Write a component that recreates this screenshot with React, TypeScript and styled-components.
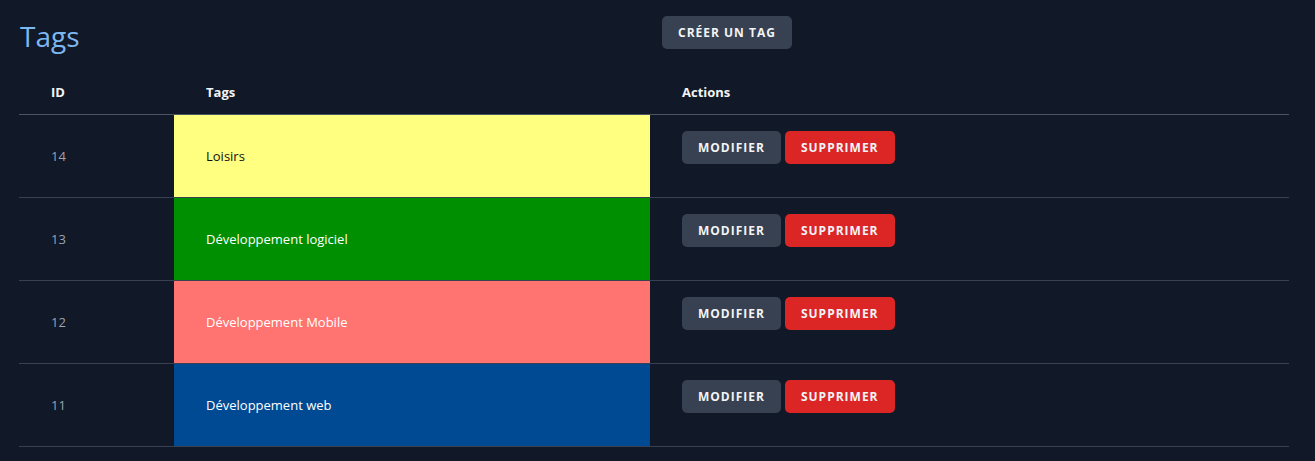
import React from "react";
import styled, { createGlobalStyle } from "styled-components";

const GlobalStyle = createGlobalStyle`
  html, body {
    margin: 0;
    padding: 0;
    background: #111827;
  }
  body {
    font-family: "Open Sans", "Noto Sans", Arial, sans-serif;
    color: #e5e7eb;
  }
`;

const Page = styled.div`
  padding: 0 26px 0 19px;
  min-height: 461px;
  box-sizing: border-box;
`;

const Header = styled.div`
  display: grid;
  grid-template-columns: 643px auto;
  align-items: center;
  height: 70px;
`;

const Title = styled.h1`
  margin: 0 0 0 1px;
  font-size: 28px;
  font-weight: 400;
  color: #7db7f0;
  line-height: 36px;
  position: relative;
  top: 1px;
`;

const HeaderRight = styled.div`
  display: flex;
  align-self: start;
  padding-top: 16px;
`;

const Button = styled.button<{ $variant?: "gray" | "red" }>`
  font-family: "Open Sans", "Noto Sans", Arial, sans-serif;
  font-size: 12px;
  font-weight: 700;
  letter-spacing: 1px;
  text-transform: uppercase;
  color: #f3f4f6;
  background: ${(p) => (p.$variant === "red" ? "#dc2626" : "#374151")};
  border: none;
  border-radius: 5px;
  height: 33px;
  padding: 0 16px;
  cursor: pointer;
  line-height: 33px;
`;

const Table = styled.table`
  width: 1270px;
  border-collapse: collapse;
`;

const HeadCell = styled.th`
  text-align: left;
  font-size: 13px;
  font-weight: 700;
  color: #f3f4f6;
  padding: 0 32px;
  height: 44px;
  border-bottom: 1px solid #4b5563;
  vertical-align: middle;
`;

const Row = styled.tr`
  border-bottom: 1px solid #374151;
`;

const IdCell = styled.td`
  width: 91px;
  padding: 0 32px;
  height: 82px;
  font-size: 13px;
  color: #9ca3af;
  vertical-align: middle;
`;

const TagCell = styled.td<{ $bg: string; $fg: string }>`
  width: 412px;
  padding: 0 32px;
  height: 82px;
  background: ${(p) => p.$bg};
  color: ${(p) => p.$fg};
  font-size: 13px;
  vertical-align: middle;
`;

const ActionsCell = styled.td`
  padding: 16px 32px 0;
  vertical-align: top;
`;

const Actions = styled.div`
  display: flex;
  gap: 4px;
`;

const tags = [
  { id: 14, name: "Loisirs", bg: "#ffff80", fg: "#111111" },
  { id: 13, name: "Développement logiciel", bg: "#008f00", fg: "#ffffff" },
  { id: 12, name: "Développement Mobile", bg: "#ff7370", fg: "#ffffff" },
  { id: 11, name: "Développement web", bg: "#004a94", fg: "#ffffff" },
];

export default function App() {
  return (
    <>
      <GlobalStyle />
      <Page>
        <Header>
          <Title>Tags</Title>
          <HeaderRight>
            <Button>Créer un tag</Button>
          </HeaderRight>
        </Header>
        <Table>
          <thead>
            <tr>
              <HeadCell>ID</HeadCell>
              <HeadCell>Tags</HeadCell>
              <HeadCell>Actions</HeadCell>
            </tr>
          </thead>
          <tbody>
            {tags.map((t) => (
              <Row key={t.id}>
                <IdCell>{t.id}</IdCell>
                <TagCell $bg={t.bg} $fg={t.fg}>
                  {t.name}
                </TagCell>
                <ActionsCell>
                  <Actions>
                    <Button>Modifier</Button>
                    <Button $variant="red">Supprimer</Button>
                  </Actions>
                </ActionsCell>
              </Row>
            ))}
          </tbody>
        </Table>
      </Page>
    </>
  );
}
